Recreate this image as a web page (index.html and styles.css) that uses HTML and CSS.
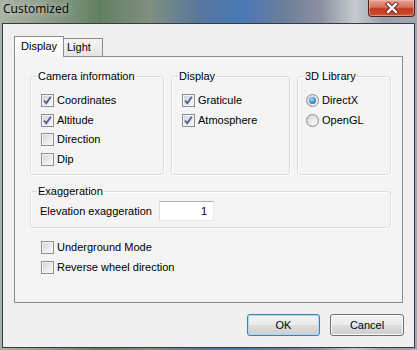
FILE: index.html
```html
<!DOCTYPE html>
<html lang="en">
<head>
  <meta charset="UTF-8" />
  <meta name="viewport" content="width=device-width, initial-scale=1.0"/>
  <title>Customized</title>
  <link rel="stylesheet" href="styles.css">
</head>
<body>
  <div class="window">
    <div class="titlebar">
      <span class="title">Customized</span>
      <button class="close">
        <svg width="14" height="12" viewBox="0 0 14 12">
          <path d="M3 2 L11 10 M11 2 L3 10" stroke="#5a2020" stroke-width="4.2" stroke-linecap="square"/>
          <path d="M3 2 L11 10 M11 2 L3 10" stroke="#fff" stroke-width="2.4" stroke-linecap="square"/>
        </svg>
      </button>
    </div>

    <div class="client">
      <div class="tabs">
        <div class="tab active">Display</div>
        <div class="tab">Light</div>
      </div>

      <div class="panel">
        <div class="group-row">
          <fieldset class="group camera">
            <legend>Camera information</legend>
            <div class="options">
              <label class="check"><span class="box on"><svg width="11" height="11" viewBox="0 0 11 11"><path d="M2 5.5 L4.3 8.3 L8.8 1.8" fill="none" stroke="#4b5e94" stroke-width="1.8"/></svg></span>Coordinates</label>
              <label class="check"><span class="box on"><svg width="11" height="11" viewBox="0 0 11 11"><path d="M2 5.5 L4.3 8.3 L8.8 1.8" fill="none" stroke="#4b5e94" stroke-width="1.8"/></svg></span>Altitude</label>
              <label class="check"><span class="box"></span>Direction</label>
              <label class="check"><span class="box"></span>Dip</label>
            </div>
          </fieldset>

          <fieldset class="group display">
            <legend>Display</legend>
            <div class="options">
              <label class="check"><span class="box on"><svg width="11" height="11" viewBox="0 0 11 11"><path d="M2 5.5 L4.3 8.3 L8.8 1.8" fill="none" stroke="#4b5e94" stroke-width="1.8"/></svg></span>Graticule</label>
              <label class="check"><span class="box on"><svg width="11" height="11" viewBox="0 0 11 11"><path d="M2 5.5 L4.3 8.3 L8.8 1.8" fill="none" stroke="#4b5e94" stroke-width="1.8"/></svg></span>Atmosphere</label>
            </div>
          </fieldset>

          <fieldset class="group library">
            <legend>3D Library</legend>
            <div class="options">
              <label class="check"><span class="radio on"></span>DirectX</label>
              <label class="check"><span class="radio"></span>OpenGL</label>
            </div>
          </fieldset>
        </div>

        <fieldset class="group exag">
          <legend>Exaggeration</legend>
          <div class="field">
            <span class="field-label">Elevation exaggeration</span>
            <input type="text" class="num" value="1" />
          </div>
        </fieldset>

        <div class="options extra">
          <label class="check"><span class="box"></span>Underground Mode</label>
          <label class="check"><span class="box"></span>Reverse wheel direction</label>
        </div>
      </div>

      <div class="buttons">
        <button class="btn default">OK</button>
        <button class="btn">Cancel</button>
      </div>
    </div>
  </div>
</body>
</html>
```

FILE: styles.css
```css
body {
  margin: 0;
  font-family: "Liberation Sans", Arial, sans-serif;
  font-size: 11px;
  color: #000;
}

.window {
  width: 417px;
  height: 350px;
  box-sizing: border-box;
  padding: 0 2px 2px 2px;
  display: flex;
  flex-direction: column;
  background: linear-gradient(90deg, #aab2a6 0%, #909f8d 10%, #62805f 24%, #7f8f80 36%, #58779c 48%, #4a78b6 58%, #6b7f9a 68%, #8a90a0 77%, #c6cbd0 85%, #98a0aa 92%, #a4a8ae 100%);
}

.titlebar {
  height: 23px;
  display: flex;
  align-items: flex-start;
}

.title {
  font-family: "Open Sans", "Liberation Sans", sans-serif;
  font-size: 12px;
  line-height: 18px;
  margin-left: 1px;
  color: #000;
  text-shadow: 0 0 6px rgba(255, 255, 255, 0.7);
}

.close {
  margin-left: auto;
  width: 47px;
  height: 17px;
  padding: 0;
  border: 1px solid #4a1e1a;
  border-top: none;
  border-radius: 0 0 4px 4px;
  background: linear-gradient(#e6a294 0%, #d4705c 45%, #c23a20 55%, #d0522e 100%);
  box-shadow: inset 0 0 0 1px rgba(255, 200, 190, 0.5);
  display: flex;
  align-items: center;
  justify-content: center;
}

.client {
  flex: 1;
  background: #f0f0f0;
  border: 1px solid #333c48;
  padding: 12px 11px 11px 11px;
  display: flex;
  flex-direction: column;
}

.tabs {
  display: flex;
  align-items: flex-end;
  height: 20px;
}

.tab {
  box-sizing: border-box;
  border: 1px solid #898c95;
  border-bottom: none;
  height: 18px;
  line-height: 17px;
  padding-left: 3px;
  width: 40px;
  margin-left: -1px;
  background: linear-gradient(#f4f4f4, #e4e4e4);
}

.tab.active {
  position: relative;
  z-index: 1;
  height: 21px;
  margin-bottom: -1px;
  margin-left: 0;
  width: 50px;
  line-height: 19px;
  padding-left: 6px;
  background: linear-gradient(#ffffff, #f8f8f8);
}

.panel {
  flex: 1;
  border: 1px solid #898c95;
  background: #f4f4f4;
  padding: 13px 11px 0 15px;
}

.group-row {
  display: flex;
  gap: 7px;
}

.group {
  margin: 0;
  padding: 11px 6px 8px 6px;
  border: 1px solid #d5dfe5;
  border-radius: 3px;
  box-shadow: 1px 1px 0 #fff, inset 1px 1px 0 #fff;
  min-width: 0;
}

.group legend {
  padding: 0 1px;
  line-height: 13px;
}

.camera {
  width: 134px;
  box-sizing: border-box;
}

.display {
  width: 119px;
  box-sizing: border-box;
}

.library {
  flex: 1;
}

.options {
  display: flex;
  flex-direction: column;
  gap: 6.5px;
  padding-left: 4px;
}

.library .options {
  padding-left: 2px;
}

.check {
  display: flex;
  align-items: center;
  height: 13px;
  line-height: 13px;
}

.box {
  box-sizing: border-box;
  width: 13px;
  height: 13px;
  margin-right: 3px;
  border: 1px solid #8e8f8f;
  background: linear-gradient(135deg, #cdd1d6 0%, #e6e7e9 50%, #f8f8f8 100%);
  box-shadow: inset 0 0 0 1px #f4f4f4;
  display: flex;
  align-items: center;
  justify-content: center;
}

.radio {
  box-sizing: border-box;
  width: 13px;
  height: 13px;
  margin-right: 3px;
  border: 1px solid #8e8f8f;
  border-radius: 50%;
  background: radial-gradient(circle at 65% 65%, #fafafa 0%, #e4e4e4 50%, #c8cbcf 100%);
  display: flex;
  align-items: center;
  justify-content: center;
}

.radio.on::after {
  content: "";
  width: 7px;
  height: 7px;
  border-radius: 50%;
  background: radial-gradient(circle at 40% 35%, #b5e6fb 0%, #3a9ad8 45%, #175a9a 100%);
}

.exag {
  margin-top: 10px;
  padding: 3px 6px 6px 6px;
}

.field {
  display: flex;
  align-items: center;
  padding-left: 3px;
}

.field-label {
  width: 119px;
}

.num {
  box-sizing: border-box;
  width: 55px;
  height: 20px;
  margin: 0;
  padding: 0 6px 0 0;
  text-align: right;
  font-family: inherit;
  font-size: 11px;
  border: 1px solid #e3e9ef;
  border-top-color: #abadb3;
  border-left-color: #dbdfe6;
  background: #fff;
}

.extra {
  margin-top: 13px;
  margin-left: 11px;
  padding-left: 0;
  gap: 7px;
}

.buttons {
  display: flex;
  justify-content: flex-end;
  gap: 10px;
  margin-top: 11px;
  margin-right: -1px;
}

.btn {
  height: 22px;
  width: 74px;
  padding: 0;
  font-family: inherit;
  font-size: 11px;
  color: #000;
  border: 1px solid #707070;
  border-radius: 3px;
  background: linear-gradient(#f2f2f2 0%, #ebebeb 50%, #dddddd 50%, #cfcfcf 100%);
  box-shadow: inset 0 0 0 1px #fbfbfb;
}

.btn.default {
  width: 73px;
  border-color: #3c7fb1;
  box-shadow: inset 0 0 0 1px #a6dcf8;
}
```
